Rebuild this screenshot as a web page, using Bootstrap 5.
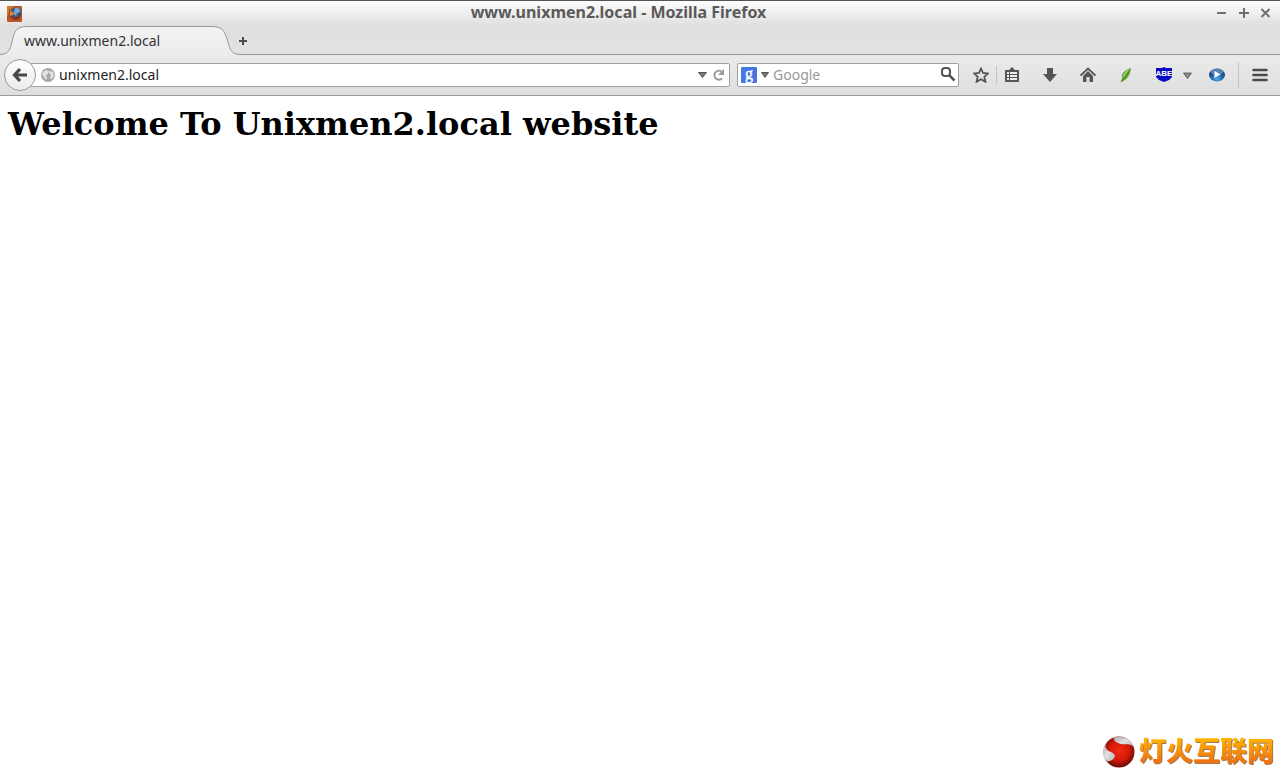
<!DOCTYPE html>
<html lang="en">
<head>
<meta charset="utf-8">
<meta name="viewport" content="width=device-width, initial-scale=1">
<title>www.unixmen2.local - Mozilla Firefox</title>
<link href="https://cdn.jsdelivr.net/npm/bootstrap@5.3.0/dist/css/bootstrap.min.css" rel="stylesheet">
<style>
  body { font-family: "Noto Sans", "Open Sans", sans-serif; font-size: 14px; line-height: 20px; color: #333; background: #fff; }
  svg { display: block; }
  button { border: 0; background: none; padding: 0; color: #4c4c4c; }
  .chrome { background: #e1e1e1; }
  .titlebar { height: 26px; border-top: 1px solid #555; background: linear-gradient(#fdfdfd, #dfdfdf); color: #5a5a5a; }
  .titlebar h1 { font-size: 16px; line-height: 22px; }
  .titlebar .window-title { padding-left: 4px; }
  .titlebar button { width: 22px; height: 22px; color: #707070; }
  .tabstrip { height: 29px; background: linear-gradient(#dfdfdf, #e2e2e2); box-shadow: inset 0 -1px #999; }
  .browser-tab { width: 240px; height: 29px; padding: 0 0 0 24px; color: #333; text-align: left; }
  .toolbar { height: 41px; border-bottom: 1px solid #999; background: linear-gradient(#ebebeb, #dedede); }
  .back { width: 32px; height: 32px; border: 1px solid #999; background: linear-gradient(#fdfdfd, #ececec); z-index: 1; }
  .field { height: 24px; border: 1px solid #a0a0a0; border-radius: 2px; background: #fff; }
  .field input { border: 0; outline: 0; background: none; padding: 0; min-width: 0; color: #222; }
  .field input::placeholder { color: #999; opacity: 1; }
  .address { margin-left: -6px; padding-left: 10px; }
  .search { width: 222px; margin: 0 7px; }
  .tool { width: 38px; height: 32px; }
  .tool-sm { width: 30px; }
  .tool-caret { width: 9px; }
  .tool-play { width: 34px; }
  .tool-menu { width: 41px; }
  .rule { width: 1px; height: 26px; background: #c3c3c3; }
  .rule-short { height: 18px; }
  .site h2 { font: bold 32px/38px "DejaVu Serif", serif; color: #000; padding: 9px 8px; }
  .brand { color: #f08a12; font: 900 27px/36px "Noto Sans CJK SC", sans-serif; text-decoration: none; padding: 6px 6px 4px; }
  .brand span { background: linear-gradient(#ffb300 20%, #ef7414 80%); -webkit-background-clip: text; background-clip: text; color: transparent; filter: drop-shadow(1px 1px 0 #a87843); }
</style>
</head>
<body class="d-flex flex-column min-vh-100">
<header class="chrome">
  <div class="titlebar d-flex align-items-center px-1">
    <svg class="me-auto flex-shrink-0" width="19" height="16" viewBox="-2 0 19 16" aria-hidden="true">
      <rect x="1" width="15" height="16" rx="1" fill="#b9532a"/><path d="M1 0h7L4 4 2 9l-1 1z" fill="#d57a35"/>
      <circle cx="10" cy="7" r="5.500" fill="#2d6295"/><path d="M9 2c3-1 5 1 5 4l-3 1-1 3-2-2z" fill="#79acd0"/>
      <path d="M4 2C2 7 4 13 9 14c4 0 6-3 6-8l-3 4c-3 3-6 0-5-3l-3-1z" fill="#803325"/><path d="M4 4l2 2 3 1-2 2-3 1z" fill="#e38536"/>
    </svg>
    <h1 class="window-title align-self-start fw-bold m-0">www.unixmen2.local - Mozilla Firefox</h1>
    <div class="d-flex ms-auto">
      <button type="button" aria-label="Minimize"><svg width="22" height="22"><path d="M7 10h9" stroke="currentColor" stroke-width="2"/></svg></button>
      <button type="button" aria-label="Maximize"><svg width="22" height="22"><path d="M7 10h10M12 5v10" stroke="currentColor" stroke-width="2"/></svg></button>
      <button type="button" aria-label="Close"><svg width="22" height="22"><path d="M7.500 6l8 8M15.500 6l-8 8" stroke="currentColor" stroke-width="2"/></svg></button>
    </div>
  </div>
  <div class="tabstrip d-flex">
    <button type="button" class="browser-tab position-relative">
      <svg class="position-absolute top-0 start-0" width="240" height="29" aria-hidden="true">
        <defs><linearGradient id="tabFill" x2="0" y2="1"><stop stop-color="#f3f3f3"/><stop offset="1" stop-color="#ebebeb"/></linearGradient></defs>
        <path d="M0 28.500C8 28.500 10 24 12 16C14 7 15 .5 27 .5H212C224 .5 225 7 228 16C230 24 232 28.500 240 28.500V29H0z" fill="url(#tabFill)"/>
        <path d="M0 28.500C8 28.500 10 24 12 16C14 7 15 .5 27 .5H212C224 .5 225 7 228 16C230 24 232 28.500 240 28.500" fill="none" stroke="#999"/>
      </svg>
      <span class="position-relative">www.unixmen2.local</span>
    </button>
    <button type="button" aria-label="New tab"><svg width="8" height="29" overflow="visible"><path d="M-1 15h8M3 11v8" stroke="#4c4c4c" stroke-width="2"/></svg></button>
  </div>
  <nav class="toolbar d-flex align-items-center ps-1" aria-label="Navigation">
    <button type="button" class="back rounded-circle position-relative d-flex align-items-center justify-content-center flex-shrink-0" aria-label="Back">
      <svg width="16" height="16"><path d="M8 2L2.500 8l5.500 6M3 8h12" fill="none" stroke="#484848" stroke-width="3.200"/></svg>
    </button>
    <div class="field address d-flex align-items-center flex-grow-1">
      <svg width="14" height="14" viewBox="0 0 14 14" aria-hidden="true"><circle cx="7" cy="7" r="7" fill="#a7a7a7"/><path d="M2 4l3-2 3 1-1 3-2 1 1 3-1 2-2-3-2-3zM9 3l3 1 1 4-2 3-2-1 1-3-2-2z" fill="#e4e4e4"/></svg>
      <input class="flex-grow-1 ms-1" type="text" value="unixmen2.local" aria-label="Address">
      <button type="button" aria-label="History"><svg width="9" height="6"><path d="M.5 .5h8L4.500 5.500z" fill="#777" stroke="#555"/></svg></button>
      <button type="button" class="mx-1" aria-label="Reload"><svg width="14" height="14"><path d="M11 10.500A4.500 4.500 0 1 1 10.500 3.500" fill="none" stroke="#999" stroke-width="2"/><path d="M13 1v6H7z" fill="#999"/></svg></button>
    </div>
    <div class="field search d-flex align-items-center flex-shrink-0">
      <button type="button" class="d-flex align-items-center" aria-label="Search engine">
        <svg width="19" height="22"><rect x="3" y="3" width="16" height="16" rx="1" fill="#4676e2"/><text x="11" y="15" text-anchor="middle" font-family="Liberation Serif, serif" font-size="16" fill="#fff" stroke="#fff" stroke-width=".4">g</text></svg>
        <svg class="ms-1" width="8" height="6"><path d="M.5 .5h7L4 5.500z" fill="#777" stroke="#555"/></svg>
      </button>
      <input class="flex-grow-1 ms-1" type="text" placeholder="Google" aria-label="Search">
      <button type="button" aria-label="Go"><svg width="18" height="16"><rect x="2" y="1" width="8" height="8" rx="3" fill="none" stroke="#555" stroke-width="2"/><path d="M9.500 8.500l5 5" stroke="#555" stroke-width="2.500"/></svg></button>
    </div>
    <div class="d-flex align-items-center flex-shrink-0">
      <button type="button" class="tool tool-sm" aria-label="Bookmark"><svg class="mx-auto" width="16" height="16"><path d="M8 1.500l2 4.500 5 .5-3.700 3.300 1.100 5L8 12.200l-4.400 2.600 1.100-5L1 6.500 6 6z" fill="none" stroke="#555" stroke-width="1.800"/></svg></button>
      <span class="rule rule-short"></span>
      <button type="button" class="tool tool-sm" aria-label="Bookmarks list"><svg class="mx-auto" width="16" height="16"><path d="M1 4q0-1 1-1h3l3-3 3 3h3q1 0 1 1v10q0 1-1 1H2q-1 0-1-1z" fill="#555"/><path d="M3 6h2M6 6h7M3 9h2M6 9h7M3 12h2M6 12h7" stroke="#eee" stroke-width="1.800"/></svg></button>
      <button type="button" class="tool ms-1" aria-label="Downloads"><svg class="mx-auto" width="16" height="16"><path d="M5 1h6v6h4l-7 8-7-8h4z" fill="#555"/></svg></button>
      <button type="button" class="tool" aria-label="Home"><svg class="mx-auto" width="16" height="16"><path d="M.5 8.500L8 1.500l7.500 7" fill="none" stroke="#555" stroke-width="1.800"/><path d="M3 9l5-5 5 5v6H9.500v-5h-3v5H3z" fill="#555"/></svg></button>
      <button type="button" class="tool" aria-label="Leaf"><svg class="mx-auto" width="16" height="16"><path d="M13 1C7 3 3 6 4 11l-1 4c6-2 9-6 10-14z" fill="#5fa332"/><path d="M12 2C7 4 5 8 4 12z" fill="#a5d477"/><path d="M3 15L12 3" stroke="#447f24"/></svg></button>
      <button type="button" class="tool" aria-label="ABE"><svg class="mx-auto" width="18" height="16"><path d="M1 1h6l2-1 2 1h6v9l-3 3-5 2-5-2-3-3z" fill="#0908c6"/><text x="9" y="9" text-anchor="middle" font-family="Liberation Sans, sans-serif" font-weight="bold" font-size="8" fill="#fff">ABE</text></svg></button>
      <button type="button" class="tool tool-caret" aria-label="ABE menu"><svg width="9" height="8"><path d="M.5 2h8L4.500 7.500z" fill="#888" stroke="#666"/></svg></button>
      <button type="button" class="tool tool-play ms-2 me-1" aria-label="Play"><svg class="mx-auto" width="16" height="16"><defs><radialGradient id="orb" cy=".8"><stop stop-color="#49abe9"/><stop offset="1" stop-color="#164f8b"/></radialGradient></defs><ellipse cx="8" cy="8" rx="8" ry="6.500" fill="url(#orb)"/><ellipse cx="8" cy="5" rx="6" ry="3" fill="#8aacce" opacity=".6"/><path d="M5.500 4l6 3.500-6 3.500z" fill="#fff"/></svg></button>
      <span class="rule"></span>
      <button type="button" class="tool tool-menu" aria-label="Menu"><svg class="mx-auto" width="16" height="14"><path d="M1.500 2h13M1.500 7h13M1.500 12h13" stroke="#4b4b4b" stroke-width="2.600" stroke-linecap="round"/></svg></button>
    </div>
  </nav>
</header>
<main class="site flex-grow-1 d-flex flex-column">
  <h2 class="m-0">Welcome To Unixmen2.local website</h2>
  <a class="brand d-flex align-items-center align-self-end mt-auto" href="#">
    <svg class="me-1" width="32" height="32" viewBox="0 0 32 32" aria-hidden="true">
      <defs><radialGradient id="ball" cx=".5" cy=".45"><stop stop-color="#f02b12"/><stop offset=".65" stop-color="#d41808"/><stop offset="1" stop-color="#7c1008"/></radialGradient><linearGradient id="silver" x2="1" y2="1"><stop stop-color="#aaa"/><stop offset=".5" stop-color="#e0e0e0"/><stop offset="1" stop-color="#b4b4b4"/></linearGradient></defs>
      <circle cx="16" cy="16" r="15.500" fill="url(#ball)"/>
      <path d="M11 1.500C19-1 28 3 31 11C27 7 22 9 18 8C13 7 10 4 11 1.500z" fill="url(#silver)"/>
      <path d="M4 6C-1 13-1 19 3 24C5 27 11 24 12 20C12 16 4 16 3 12C2 10 3 8 4 6z" fill="url(#silver)"/>
    </svg>
    <span class="mb-1">灯火互联网</span>
  </a>
</main>
<script src="https://cdn.jsdelivr.net/npm/bootstrap@5.3.0/dist/js/bootstrap.bundle.min.js"></script>
</body>
</html>
